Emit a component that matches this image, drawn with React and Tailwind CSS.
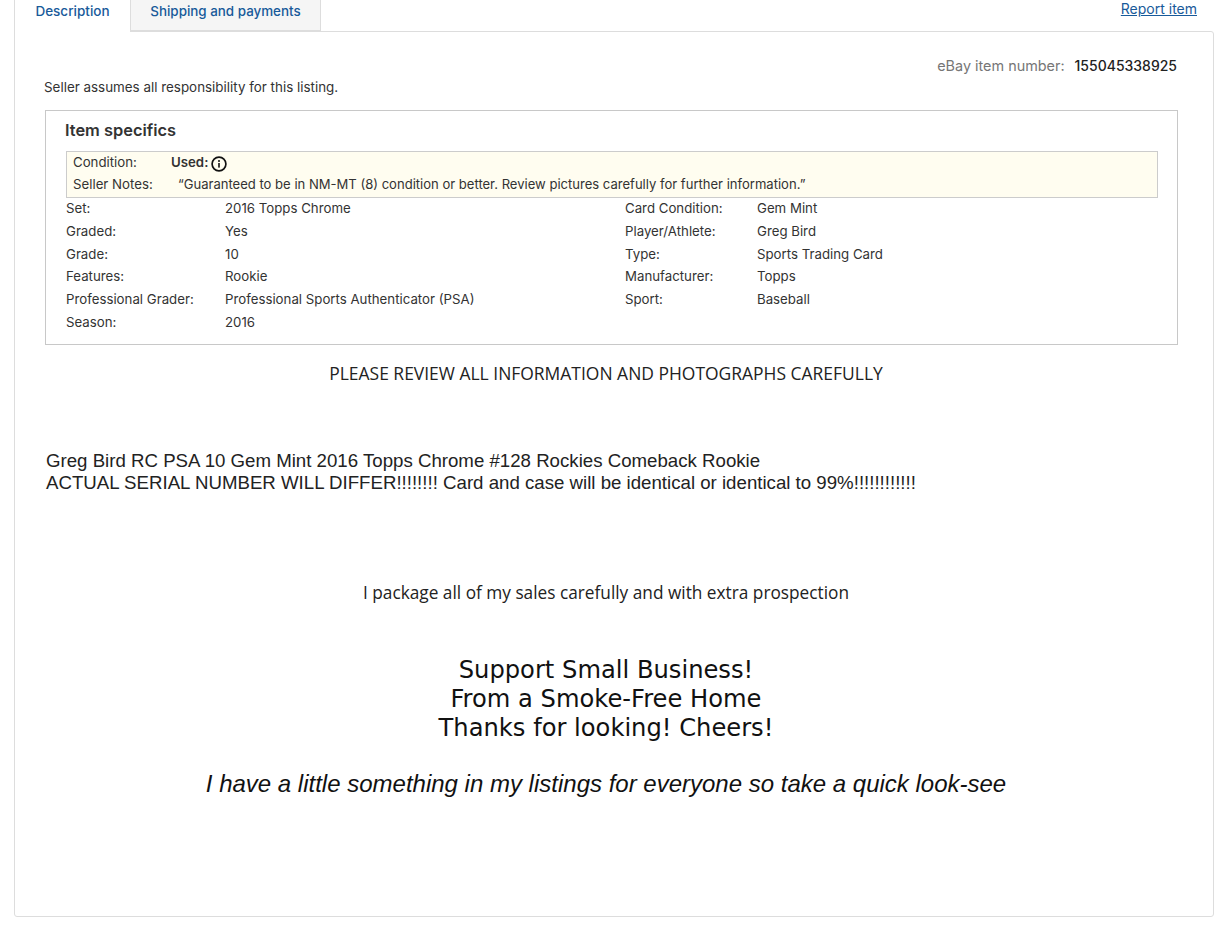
const leftRows = [
    ['Set:', '2016 Topps Chrome'],
    ['Graded:', 'Yes'],
    ['Grade:', '10'],
    ['Features:', 'Rookie'],
    ['Professional Grader:', 'Professional Sports Authenticator (PSA)'],
    ['Season:', '2016'],
]

const rightRows = [
    ['Card Condition:', 'Gem Mint'],
    ['Player/Athlete:', 'Greg Bird'],
    ['Type:', 'Sports Trading Card'],
    ['Manufacturer:', 'Topps'],
    ['Sport:', 'Baseball'],
]

const InfoIcon = () => (
    <svg width="16" height="16" viewBox="0 0 16 16" fill="none" className="ml-[3px] mt-[2px] shrink-0">
        <circle cx="8" cy="8" r="6.9" stroke="#111" strokeWidth="1.7" />
        <rect x="7.2" y="7" width="1.6" height="4.6" fill="#111" />
        <circle cx="8" cy="4.9" r="1" fill="#111" />
    </svg>
)

const SpecRows = ({ rows, labelWidth }) => (
    <div className="flex flex-col">
        {rows.map(([label, value]) => (
            <div key={label} className="flex h-[22.7px] items-center">
                <span className="shrink-0" style={{ width: labelWidth }}>{label}</span>
                <span>{value}</span>
            </div>
        ))}
    </div>
)

const App = () => {
    return (
        <div className="h-[930px] w-[1229px] overflow-hidden bg-white font-['Inter',sans-serif] text-[13.25px] text-[#333]">
            {/* Tabs */}
            <div className="ml-[14px] flex h-[31px] w-[1200px] items-start">
                <div className="relative z-10 -mb-px flex h-[32px] w-[117px] items-start justify-center border-r border-l border-[#ddd] bg-white pt-[1px] text-[13.5px] font-medium text-[#185a9a]">
                    Description
                </div>
                <div className="flex h-[31px] w-[190px] items-start justify-center border-r border-b border-[#ddd] bg-[#f5f5f5] pt-[1px] text-[13.4px] font-medium text-[#185a9a]">
                    Shipping and payments
                </div>
                <a className="mr-[17px] ml-auto text-[14px] leading-[18px] text-[#185a9a] underline">Report item</a>
            </div>

            {/* Card */}
            <div className="ml-[14px] h-[886px] w-[1200px] rounded-tr-[3px] rounded-b-[3px] border border-[#ddd] px-[30px]">
                <div className="flex justify-end pt-[25px] pr-[6px] text-[14px] leading-[18px]">
                    <span className="text-[14.4px] text-[#767676]">eBay item number:</span>
                    <span className="ml-[10px] font-medium text-[#222]">155045338925</span>
                </div>
                <div className="mt-[3px] -ml-px text-[13.4px] leading-[18px] text-[#333]">Seller assumes all responsibility for this listing.</div>

                {/* Item specifics */}
                <div className="mt-[14px] h-[235px] w-[1133px] border border-[#c8c8c8] px-[20px]">
                    <h2 className="mt-[9px] -ml-px text-[16.4px] leading-[20px] font-semibold text-[#333]">Item specifics</h2>
                    <div className="mt-[11px] h-[47px] w-[1092px] border border-[#ccc] bg-[#fffdf0] pl-[6px]">
                        <div className="flex h-[22px] items-center">
                            <span className="w-[98px] shrink-0">Condition:</span>
                            <span className="font-semibold">Used:</span>
                            <InfoIcon />
                        </div>
                        <div className="flex h-[22px] items-center">
                            <span className="w-[105px] shrink-0">Seller Notes:</span>
                            <span className="text-[13.06px]">“Guaranteed to be in NM-MT (8) condition or better. Review pictures carefully for further information.”</span>
                        </div>
                    </div>
                    <div className="flex">
                        <div className="w-[559px]">
                            <SpecRows rows={leftRows} labelWidth={159} />
                        </div>
                        <SpecRows rows={rightRows} labelWidth={132} />
                    </div>
                </div>

                {/* Listing description */}
                <div className="w-[1122px] text-center font-['Open_Sans',sans-serif] text-[17.47px] text-[#222]">
                    <p className="mt-[17px] leading-[22px]">PLEASE REVIEW ALL INFORMATION AND PHOTOGRAPHS CAREFULLY</p>
                </div>
                <div className="mt-[66px] ml-[1px] font-['Liberation_Sans',sans-serif] text-[18.66px] leading-[22px] text-[#222]">
                    <p>Greg Bird RC PSA 10 Gem Mint 2016 Topps Chrome #128 Rockies Comeback Rookie</p>
                    <p>ACTUAL SERIAL NUMBER WILL DIFFER!!!!!!!! Card and case will be identical or identical to 99%!!!!!!!!!!!!</p>
                </div>
                <p className="mt-[88px] w-[1122px] text-center font-['Open_Sans',sans-serif] text-[17.25px] leading-[22px] text-[#222]">
                    I package all of my sales carefully and with extra prospection
                </p>
                <div className="mt-[52px] w-[1122px] text-center font-['DejaVu_Sans',sans-serif] text-[24.2px] leading-[29px] text-[#111]">
                    <p>Support Small Business!</p>
                    <p>From a Smoke-Free Home</p>
                    <p>Thanks for looking! Cheers!</p>
                </div>
                <p className="mt-[26px] w-[1122px] text-center font-['Liberation_Sans',sans-serif] text-[24px] leading-[29px] text-[#111] italic">
                    I have a little something in my listings for everyone so take a quick look-see
                </p>
            </div>
        </div>
    )
}

export default App
